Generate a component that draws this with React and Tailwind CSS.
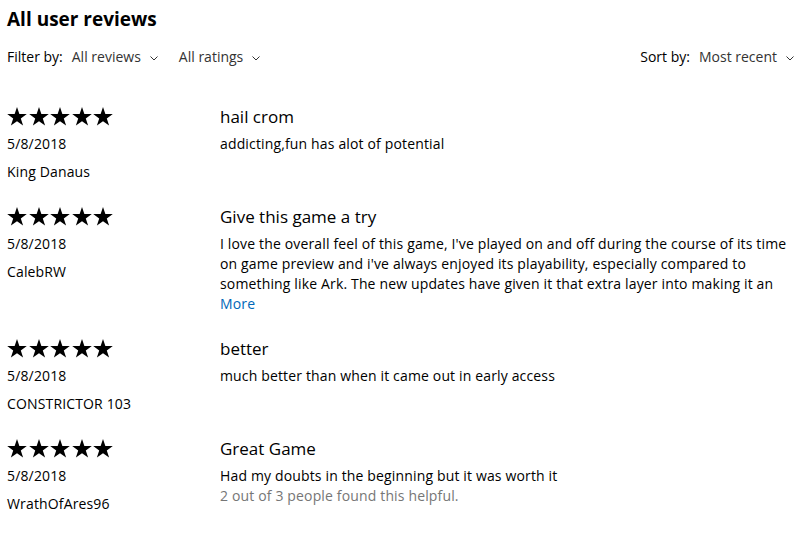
import React from 'react';

const reviews = [
  {
    date: '5/8/2018',
    author: 'King Danaus',
    title: 'hail crom',
    lines: ['addicting,fun has alot of potential'],
  },
  {
    date: '5/8/2018',
    author: 'CalebRW',
    title: 'Give this game a try',
    lines: [
      "I love the overall feel of this game, I've played on and off during the course of its time",
      "on game preview and i've always enjoyed its playability, especially compared to",
      'something like Ark. The new updates have given it that extra layer into making it an',
    ],
    more: true,
  },
  {
    date: '5/8/2018',
    author: 'CONSTRICTOR 103',
    title: 'better',
    lines: ['much better than when it came out in early access'],
  },
  {
    date: '5/8/2018',
    author: 'WrathOfAres96',
    title: 'Great Game',
    lines: ['Had my doubts in the beginning but it was worth it'],
    helpful: '2 out of 3 people found this helpful.',
  },
];

function Chevron() {
  return (
    <svg width="8" height="5" viewBox="0 0 8 5" className="ml-[9px] mt-[2px]">
      <path d="M0.5 0.5 L4 4 L7.5 0.5" fill="none" stroke="#333" strokeWidth="1" />
    </svg>
  );
}

function Star() {
  return (
    <svg width="20" height="19" viewBox="0 0 20 19">
      <path d="M10 0 L12.35 7.1 L19.8 7.1 L13.8 11.5 L16.1 18.6 L10 14.2 L3.9 18.6 L6.2 11.5 L0.2 7.1 L7.65 7.1 Z" fill="#000" />
    </svg>
  );
}

function Dropdown({ label }) {
  return (
    <div className="flex items-center text-[#333]">
      <span>{label}</span>
      <Chevron />
    </div>
  );
}

function Review({ review }) {
  return (
    <div className="flex tracking-[0.15px]">
      <div className="w-[213px] shrink-0">
        <div className="flex gap-[1.5px] h-[20px] items-center">
          {[0, 1, 2, 3, 4].map((i) => (
            <Star key={i} />
          ))}
        </div>
        <div className="mt-[8px] leading-[20px]">{review.date}</div>
        <div className="mt-[8px] leading-[20px]">{review.author}</div>
      </div>
      <div className="flex-1 min-w-0">
        <div className="text-[17px] leading-[22px] tracking-normal">{review.title}</div>
        <div className="mt-[6px] leading-[20px]">
          {review.lines.map((l, i) => (
            <div key={i} className="whitespace-nowrap">{l}</div>
          ))}
          {review.more && <div className="text-[#0067b8]">More</div>}
          {review.helpful && <div className="text-[#767676]">{review.helpful}</div>}
        </div>
      </div>
    </div>
  );
}

export default function App() {
  return (
    <div
      className="w-[802px] h-[533px] bg-white text-black text-[14px] px-[7px] pt-[5px] overflow-hidden"
      style={{ fontFamily: '"Open Sans", sans-serif' }}
    >
      <h1 className="text-[19px] leading-[28px] font-bold">All user reviews</h1>

      <div className="mt-[14px] flex items-center leading-[20px]">
        <span>Filter by:</span>
        <div className="ml-[9px]">
          <Dropdown label="All reviews" />
        </div>
        <div className="ml-[21px]">
          <Dropdown label="All ratings" />
        </div>
        <div className="ml-auto flex items-center pr-[1px]">
          <span>Sort by:</span>
          <div className="ml-[9px]">
            <Dropdown label="Most recent" />
          </div>
        </div>
      </div>

      <div className="mt-[39px] flex flex-col gap-[24px]">
        {reviews.map((r, i) => (
          <Review key={i} review={r} />
        ))}
      </div>
    </div>
  );
}
